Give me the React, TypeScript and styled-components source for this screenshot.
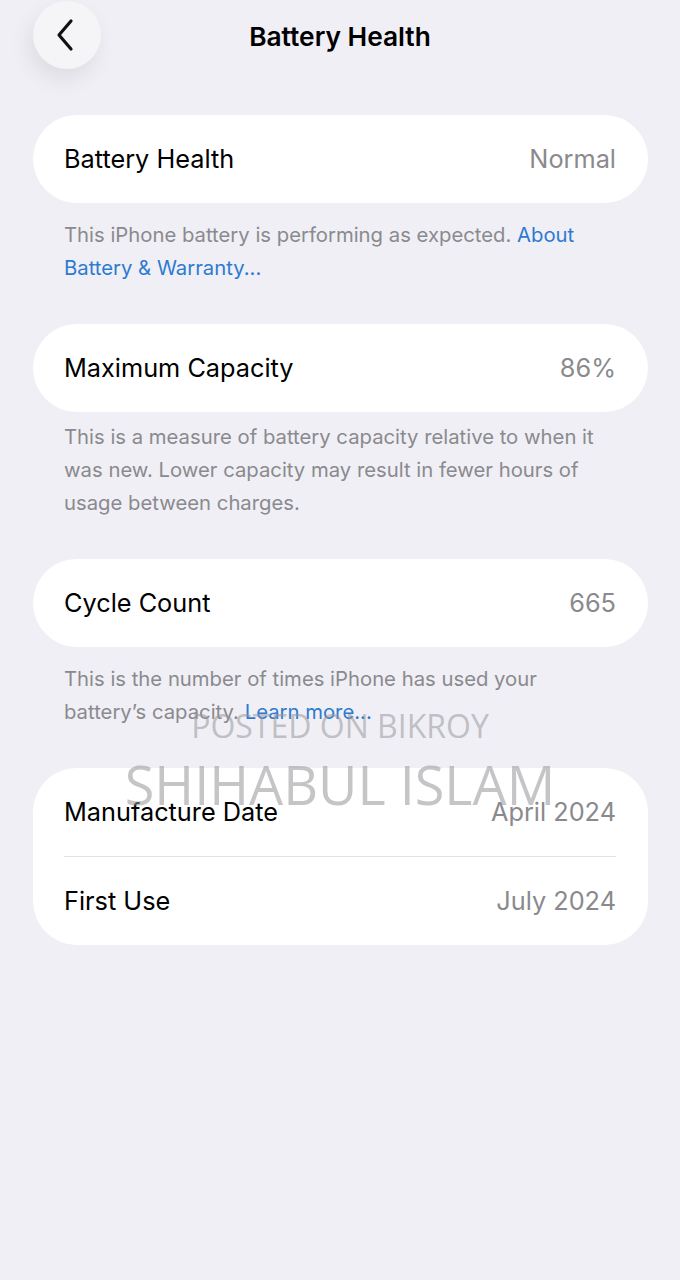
import React from 'react';
import styled, { createGlobalStyle } from 'styled-components';

const GlobalStyle = createGlobalStyle`
    html, body {
        margin: 0;
        padding: 0;
        background: #f0eff5;
    }
    body {
        font-family: Inter, 'Noto Sans', sans-serif;
        -webkit-font-smoothing: antialiased;
    }
`;

interface RowData {
    label: string,
    value: string
}

interface SectionData {
    rows: RowData[],
    footer?: React.ReactNode,
    footerTop?: number
}

const getSections = (): SectionData[] => [
    {
        rows: [{ label: 'Battery Health', value: 'Normal' }],
        footer: <>This iPhone battery is performing as expected. <Link>About Battery &amp; Warranty...</Link></>,
        footerTop: 15
    },
    {
        rows: [{ label: 'Maximum Capacity', value: '86%' }],
        footer: 'This is a measure of battery capacity relative to when it was new. Lower capacity may result in fewer hours of usage between charges.',
        footerTop: 8
    },
    {
        rows: [{ label: 'Cycle Count', value: '665' }],
        footer: <>This is the number of times iPhone has used your battery’s capacity. <Link>Learn more...</Link></>,
        footerTop: 15
    },
    {
        rows: [
            { label: 'Manufacture Date', value: 'April 2024' },
            { label: 'First Use', value: 'July 2024' }
        ]
    }
];

const App = () => {
    const sections = getSections();
    return (
        <Page>
            <GlobalStyle />
            <Header>
                <BackButton aria-label='Back'>
                    <svg width='22' height='34' viewBox='0 0 22 34' fill='none'>
                        <path d='M17 3 L5 17 L17 31' stroke='#111' strokeWidth='3.2' strokeLinecap='round' strokeLinejoin='round' />
                    </svg>
                </BackButton>
                <Title>Battery Health</Title>
            </Header>
            <Content>
                {sections.map((section, i) => (
                    <Section key={i}>
                        <Card>
                            {section.rows.map((row, j) => (
                                <Row key={row.label} $divided={j > 0}>
                                    <Label>{row.label}</Label>
                                    <Value>{row.value}</Value>
                                </Row>
                            ))}
                        </Card>
                        {section.footer && <Footer $top={section.footerTop ?? 14}>{section.footer}</Footer>}
                    </Section>
                ))}
            </Content>
            <Watermark>
                <WatermarkSmall>POSTED ON BIKROY</WatermarkSmall>
                <WatermarkLarge>SHIHABUL ISLAM</WatermarkLarge>
            </Watermark>
        </Page>
    );
}

const Page = styled.div`
    position: relative;
    width: 680px;
    height: 1280px;
    background: #f0eff5;
    overflow: hidden;
`;

const Header = styled.div`
    position: relative;
    height: 72px;
    display: flex;
    align-items: center;
    justify-content: center;
`;

const BackButton = styled.button`
    position: absolute;
    left: 33px;
    top: 1px;
    width: 68px;
    height: 68px;
    border-radius: 50%;
    border: none;
    background: #f5f5f8;
    box-shadow: -4px 10px 22px rgba(0, 0, 0, 0.08);
    display: flex;
    align-items: center;
    justify-content: center;
    padding: 0 4px 0 0;
`;

const Title = styled.h1`
    margin: 0;
    font-size: 26.3px;
    font-weight: 600;
    color: #000;
`;

const Content = styled.div`
    padding: 43px 32px 0 33px;
    display: flex;
    flex-direction: column;
    gap: 40px;
`;

const Section = styled.div`
    display: flex;
    flex-direction: column;
`;

const Card = styled.div`
    background: #fff;
    border-radius: 44px;
    padding: 0 32px 0 31px;
`;

const Row = styled.div<{ $divided: boolean }>`
    height: ${props => props.$divided ? '89px' : '88px'};
    display: flex;
    align-items: center;
    justify-content: space-between;
    border-top: ${props => props.$divided ? '1px solid #e2e2e6' : 'none'};
    font-size: 25.3px;
    padding-bottom: 2px;
    box-sizing: border-box;
`;

const Label = styled.span`
    color: #000;
`;

const Value = styled.span`
    color: #8a8a8e;
`;

const Footer = styled.p<{ $top: number }>`
    margin: 0;
    padding: ${props => props.$top}px 40px 0 31px;
    font-size: 20.3px;
    line-height: 33px;
    color: #8a8a8e;
`;

const Link = styled.span`
    color: #2c7bd0;
`;

const Watermark = styled.div`
    position: absolute;
    left: 0;
    right: 0;
    top: 704px;
    display: flex;
    flex-direction: column;
    align-items: center;
    pointer-events: none;
    font-family: 'Open Sans', 'Noto Sans', sans-serif;
    color: rgba(150, 150, 155, 0.55);
`;

const WatermarkSmall = styled.div`
    font-size: 32px;
    line-height: 44px;
`;

const WatermarkLarge = styled.div`
    font-size: 54px;
    line-height: 72px;
`;

export default App;
